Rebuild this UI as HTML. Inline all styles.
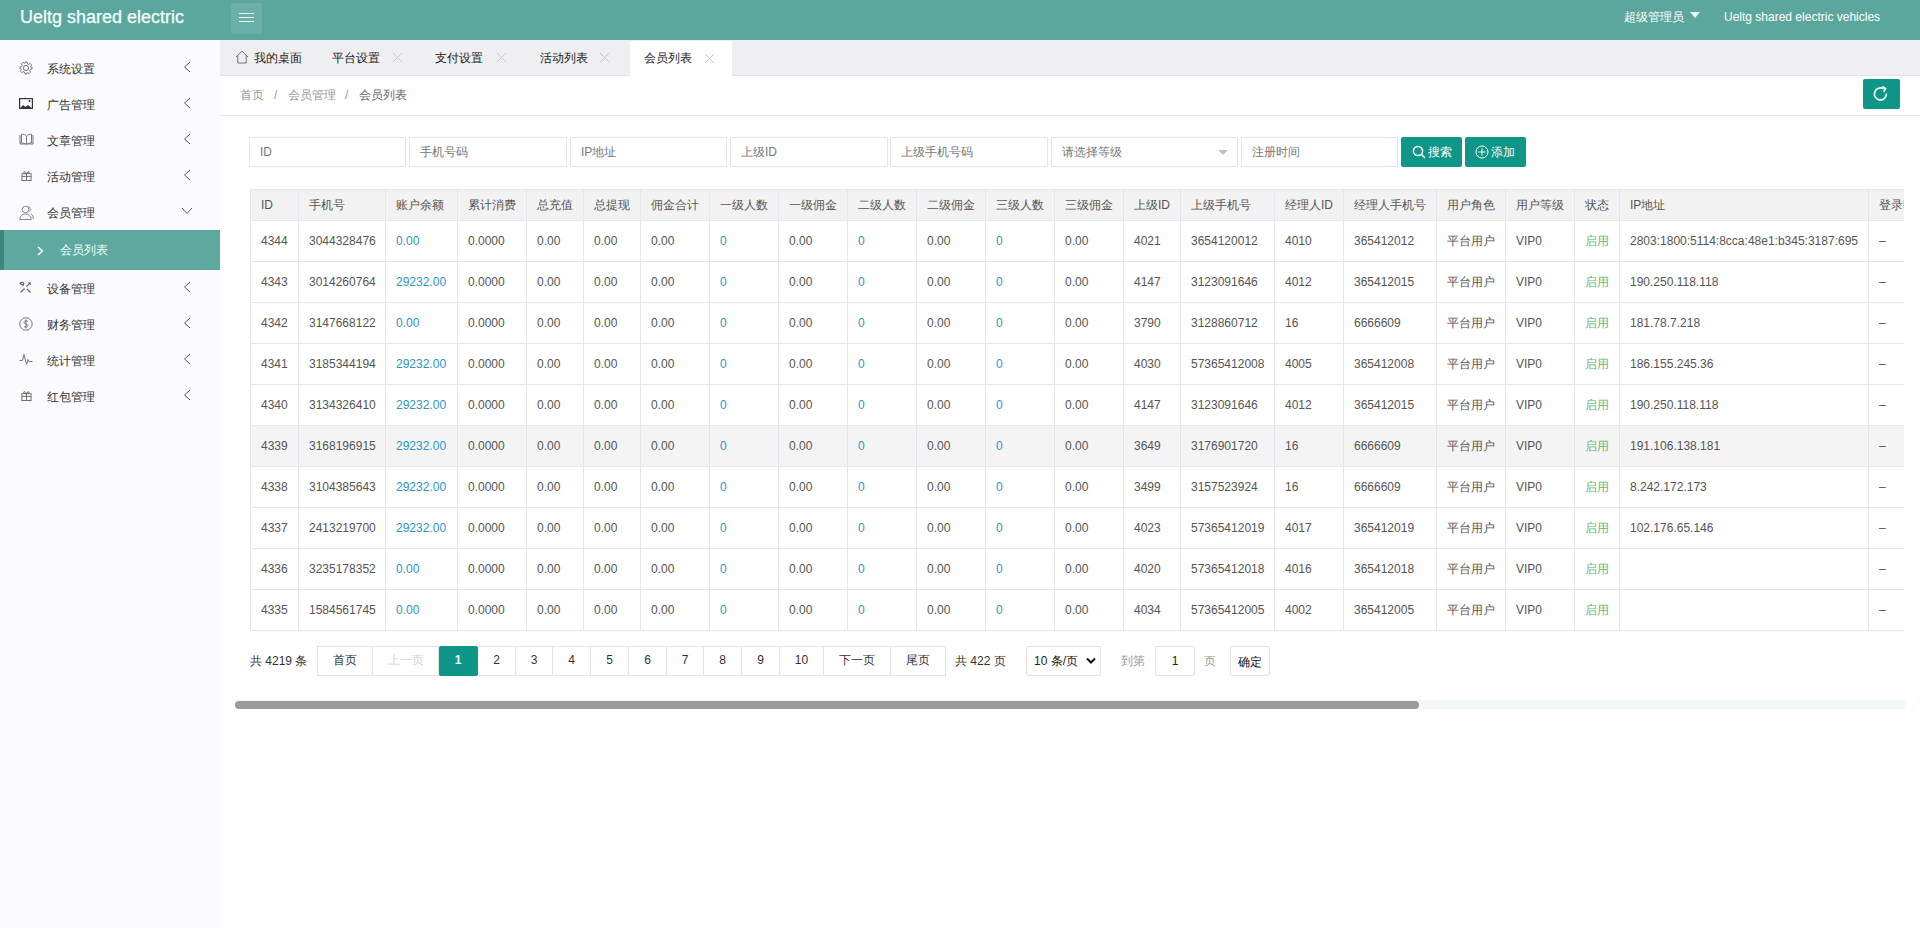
<!DOCTYPE html>
<html><head><meta charset="utf-8">
<style>
*{margin:0;padding:0;box-sizing:border-box}
html,body{width:1920px;height:928px;overflow:hidden;background:#fff;font-family:"Liberation Sans",sans-serif;font-size:12px;color:#666}
.hdr{position:absolute;left:0;top:0;width:1920px;height:40px;background:#5ca79d}
.logo{position:absolute;left:20px;top:6px;font-size:18px;color:#f2fffd;line-height:22px;white-space:nowrap;-webkit-text-stroke:0.25px #f2fffd}
.ham{position:absolute;left:231px;top:3px;width:31px;height:31px;background:#6bb0a7;border-radius:2px}
.ham i{position:absolute;left:8px;width:15px;height:1px;background:#e6fffb}
.hr1{position:absolute;left:1624px;top:9px;color:#fff;font-size:12px;line-height:16px;white-space:nowrap}
.tri{position:absolute;left:1690px;top:12px;width:0;height:0;border-left:5px solid transparent;border-right:5px solid transparent;border-top:6px solid #e8fbf8}
.hr2{position:absolute;left:1724px;top:9px;color:#fff;font-size:12px;line-height:16px;white-space:nowrap}
.side{position:absolute;left:0;top:40px;width:220px;height:888px;background:#fbfafc}
.mi{position:absolute;left:0;width:220px;height:36px;margin-top:-40px}
.mi .ic{position:absolute;left:19px;top:11px;width:15px;height:15px;line-height:0}
.mi .mt{position:absolute;left:47px;top:11px;line-height:16px;color:#333;font-size:12px}
.mi .ar{position:absolute;line-height:0}
.sub{position:absolute;left:0;top:190px;width:220px;height:40px;background:#5fa89f;border-left:4px solid #3f857c}
.subar{position:absolute;left:33px;top:16px;line-height:0}
.subt{position:absolute;left:56px;top:12px;line-height:16px;color:#eafffb}
.tabs{position:absolute;left:220px;top:40px;width:1700px;height:36px;background:#efeff1;border-bottom:1px solid #e4e4e6}
.tab{position:absolute;top:0;height:35px;line-height:36px;color:#222;white-space:nowrap}
.tab.act{background:#fff;height:36px;top:1px;line-height:34px}
.tx{position:absolute;top:12px;line-height:0}
.bc{position:absolute;left:220px;top:76px;width:1700px;height:40px;border-bottom:1px solid #eaeaea}
.bc span{position:absolute;top:11px;line-height:16px;color:#999}
.refresh{position:absolute;left:1863px;top:79px;width:37px;height:30px;background:#0f9688;border-radius:2px}
.inp{position:absolute;top:137px;height:30px;border:1px solid #e6e5ea;background:#fff;color:#777;line-height:28px;padding-left:10px;white-space:nowrap}
.btn{position:absolute;top:137px;height:30px;background:#0f9688;color:#fff;border-radius:2px;line-height:30px;white-space:nowrap}
.tbl{position:absolute;left:250px;top:189px;width:1654px;overflow:hidden;border-top:1px solid #e6e5ea}
.tr{display:flex;height:41px;border-bottom:1px solid #e6e5ea;background:#fff;width:1800px}
.tr.th{height:31px;background:#f2f2f2;color:#666}
.tr.hv{background:#f4f4f4}
.c{flex:none;border-left:1px solid #e6e5ea;padding-left:10px;line-height:40px;white-space:nowrap;overflow:hidden;color:#555}
.th .c{line-height:30px}
.bl{color:#2d95cd}
.gr{color:#5fb878}
.pg{position:absolute;top:646px;height:30px;line-height:27px;text-align:center;border:1px solid #e2e2e2;border-left:none;background:#fff;color:#333}
.pg:first-child{border-left:1px solid #e2e2e2}
.pg.dis{color:#d2d2d2}
.pg.act{background:#0f9688;color:#e8fffb;border-color:#0f9688;border-radius:2px;font-weight:bold}
.ptxt{position:absolute;top:653px;line-height:16px;color:#333;white-space:nowrap}
.scroll{position:absolute;left:235px;top:700px;width:1670px;height:9px;background:#f2f8f8}
.thumb{position:absolute;left:235px;top:701px;width:1184px;height:8px;background:#9b9b9d;border-radius:4px}
</style></head><body>
<div class="hdr">
  <div class="logo">Ueltg shared electric</div>
  <div class="ham"><i style="top:10px"></i><i style="top:14px"></i><i style="top:18px"></i></div>
  <div class="hr1">超级管理员</div><div class="tri"></div>
  <div class="hr2">Ueltg shared electric vehicles</div>
</div>
<div class="side"><div class="mi" style="top:50px"><span class="ic"><svg width="14" height="14" viewBox="0 0 14 14" fill="none" stroke="#777" stroke-width="1"><circle cx="7" cy="7" r="2.6"/><path d="M6 1h2l.4 1.7 1.3.6 1.5-.9 1.4 1.4-.9 1.5.6 1.3L13 6v2l-1.7.4-.6 1.3.9 1.5-1.4 1.4-1.5-.9-1.3.6L8 13H6l-.4-1.7-1.3-.6-1.5.9-1.4-1.4.9-1.5-.6-1.3L1 8V6l1.7-.4.6-1.3-.9-1.5 1.4-1.4 1.5.9 1.3-.6z"/></svg></span><span class="mt">系统设置</span><span class="ar" style="left:183px;top:11px"><svg width="8" height="12" viewBox="0 0 8 12" fill="none" stroke="#555" stroke-width="1"><path d="M7 1L1.5 6 7 11"/></svg></span></div><div class="mi" style="top:86px"><span class="ic"><svg style="margin-top:1px" width="14" height="11" viewBox="0 0 14 11"><rect x="0.6" y="0.6" width="12.8" height="9.8" fill="none" stroke="#333" stroke-width="1.2"/><path d="M1 10.5l3-3.5 2.5 2 2.5-2 4 3.5z" fill="#333"/><circle cx="10.5" cy="3" r="1" fill="#333"/></svg></span><span class="mt">广告管理</span><span class="ar" style="left:183px;top:11px"><svg width="8" height="12" viewBox="0 0 8 12" fill="none" stroke="#555" stroke-width="1"><path d="M7 1L1.5 6 7 11"/></svg></span></div><div class="mi" style="top:122px"><span class="ic"><svg width="15" height="12" viewBox="0 0 15 12" fill="none" stroke="#777" stroke-width="1"><path d="M1 2v9h5.5M14 2v9H8.5"/><path d="M2.5 10V1.2C4.5 1 6 1.5 7.5 3c1.5-1.5 3-2 5-1.8V10C10.5 10 9 10.5 7.5 11.5 6 10.5 4.5 10 2.5 10z"/><path d="M7.5 3v8"/></svg></span><span class="mt">文章管理</span><span class="ar" style="left:183px;top:11px"><svg width="8" height="12" viewBox="0 0 8 12" fill="none" stroke="#555" stroke-width="1"><path d="M7 1L1.5 6 7 11"/></svg></span></div><div class="mi" style="top:158px"><span class="ic"><svg style="margin-left:2px;margin-top:1px" width="11" height="11" viewBox="0 0 12 12" fill="none" stroke="#666" stroke-width="1"><rect x="1" y="4" width="10" height="7.5"/><path d="M1 7h10M6 4v7.5"/><path d="M6 4C5 1.5 3 1 3 2.5S5 4 6 4c1 0 3-.5 3-1.5S7 1.5 6 4"/></svg></span><span class="mt">活动管理</span><span class="ar" style="left:183px;top:11px"><svg width="8" height="12" viewBox="0 0 8 12" fill="none" stroke="#555" stroke-width="1"><path d="M7 1L1.5 6 7 11"/></svg></span></div><div class="mi" style="top:194px"><span class="ic"><svg width="15" height="15" viewBox="0 0 15 15" fill="none" stroke="#888" stroke-width="1"><circle cx="6.5" cy="4.5" r="3.3"/><path d="M0.8 14.5c0-3.5 2.5-5.5 5.7-5.5s5.7 2 5.7 5.5z"/><path d="M9.5 1.5c2 .5 2.5 3.5 1 5M12 9c1.5.8 2.3 2.5 2.3 5"/></svg></span><span class="mt">会员管理</span><span class="ar" style="left:181px;top:13px"><svg width="12" height="8" viewBox="0 0 12 8" fill="none" stroke="#555" stroke-width="1"><path d="M1 1l5 5.5 5-5.5"/></svg></span></div><div class="sub"><span class="subar"><svg width="7" height="10" viewBox="0 0 7 10" fill="none" stroke="#e8fffb" stroke-width="1.6"><path d="M1 1l4.3 4L1 9"/></svg></span><span class="subt">会员列表</span></div><div class="mi" style="top:270px"><span class="ic"><svg width="13" height="13" viewBox="0 0 13 13" fill="none" stroke="#666" stroke-width="1.1"><path d="M1.5 11.5l4-4M7.5 5.5l4-4M9.5 1.2l2.3 2.3M1 2.5c1-1.5 3-1.5 3.8 0L4 4.5 2.8 3.5zM8 8l3.5 3.5"/></svg></span><span class="mt">设备管理</span><span class="ar" style="left:183px;top:11px"><svg width="8" height="12" viewBox="0 0 8 12" fill="none" stroke="#555" stroke-width="1"><path d="M7 1L1.5 6 7 11"/></svg></span></div><div class="mi" style="top:306px"><span class="ic"><svg width="14" height="14" viewBox="0 0 14 14" fill="none" stroke="#777" stroke-width="1"><circle cx="7" cy="7" r="6.2"/><path d="M9 4.6C8.5 4 7.8 3.8 7 3.8 5.8 3.8 5 4.4 5 5.4c0 2 4 1.2 4 3.2 0 1-.9 1.6-2 1.6-.9 0-1.6-.3-2.1-.9M7 2.6v8.8"/></svg></span><span class="mt">财务管理</span><span class="ar" style="left:183px;top:11px"><svg width="8" height="12" viewBox="0 0 8 12" fill="none" stroke="#555" stroke-width="1"><path d="M7 1L1.5 6 7 11"/></svg></span></div><div class="mi" style="top:342px"><span class="ic"><svg width="14" height="13" viewBox="0 0 14 13" fill="none" stroke="#777" stroke-width="1"><path d="M0.5 7.5h3l1.5-6 2.5 10 1.5-5 1 2h3.5"/></svg></span><span class="mt">统计管理</span><span class="ar" style="left:183px;top:11px"><svg width="8" height="12" viewBox="0 0 8 12" fill="none" stroke="#555" stroke-width="1"><path d="M7 1L1.5 6 7 11"/></svg></span></div><div class="mi" style="top:378px"><span class="ic"><svg style="margin-left:2px;margin-top:1px" width="11" height="11" viewBox="0 0 12 12" fill="none" stroke="#666" stroke-width="1"><rect x="1" y="4" width="10" height="7.5"/><path d="M1 7h10M6 4v7.5"/><path d="M6 4C5 1.5 3 1 3 2.5S5 4 6 4c1 0 3-.5 3-1.5S7 1.5 6 4"/></svg></span><span class="mt">红包管理</span><span class="ar" style="left:183px;top:11px"><svg width="8" height="12" viewBox="0 0 8 12" fill="none" stroke="#555" stroke-width="1"><path d="M7 1L1.5 6 7 11"/></svg></span></div></div>
<div class="tabs">
  <div class="tab" style="left:14px"><svg style="position:absolute;left:1px;top:10px" width="14" height="14" viewBox="0 0 14 14" fill="none" stroke="#666" stroke-width="0.9"><path d="M1 7L7 1.2 13 7M2.8 5.5V13h8.4V5.5"/></svg><span style="position:absolute;left:20px;top:0">我的桌面</span></div>
  <div class="tab" style="left:112px"><span>平台设置</span><svg class="tx" style="left:60px" width="11" height="11" viewBox="0 0 11 11" stroke="#c8c8c8" stroke-width="1"><path d="M1 1l9 9M10 1l-9 9"/></svg></div>
  <div class="tab" style="left:215px"><span>支付设置</span><svg class="tx" style="left:61px" width="11" height="11" viewBox="0 0 11 11" stroke="#c8c8c8" stroke-width="1"><path d="M1 1l9 9M10 1l-9 9"/></svg></div>
  <div class="tab" style="left:320px"><span>活动列表</span><svg class="tx" style="left:59px" width="11" height="11" viewBox="0 0 11 11" stroke="#c8c8c8" stroke-width="1"><path d="M1 1l9 9M10 1l-9 9"/></svg></div>
  <div class="tab act" style="left:410px;width:102px"><span style="position:absolute;left:14px">会员列表</span><svg class="tx" style="left:74px" width="11" height="11" viewBox="0 0 11 11" stroke="#c8c8c8" stroke-width="1"><path d="M1 1l9 9M10 1l-9 9"/></svg></div>
</div>
<div class="bc"><span style="left:20px">首页</span><span style="left:54px">/</span><span style="left:68px">会员管理</span><span style="left:125px">/</span><span style="left:139px;color:#666">会员列表</span></div>
<div class="refresh"><svg style="position:absolute;left:9px;top:7px" width="18" height="17" viewBox="0 0 18 17" fill="none" stroke="#f0fffd" stroke-width="1.7"><path d="M14.4 7.5A6 6 0 1 1 11.5 2.8"/><path d="M10.3 0.6l3.2 2-1.8 3.2"/></svg></div>
<div class="inp" style="left:249px;width:157px">ID</div>
<div class="inp" style="left:409px;width:158px">手机号码</div>
<div class="inp" style="left:570px;width:157px">IP地址</div>
<div class="inp" style="left:730px;width:158px">上级ID</div>
<div class="inp" style="left:890px;width:158px">上级手机号码</div>
<div class="inp" style="left:1051px;width:187px">请选择等级<i style="position:absolute;left:166px;top:12px;border-left:5.5px solid transparent;border-right:5.5px solid transparent;border-top:5.5px solid #c2c2c2"></i></div>
<div class="inp" style="left:1241px;width:157px">注册时间</div>
<div class="btn" style="left:1401px;width:61px"><svg style="position:absolute;left:11px;top:8px" width="14" height="14" viewBox="0 0 14 14" fill="none" stroke="#fff" stroke-width="1.5"><circle cx="6" cy="6" r="4.6"/><path d="M9.3 9.3L13 13"/></svg><span style="position:absolute;left:27px">搜索</span></div>
<div class="btn" style="left:1465px;width:61px"><svg style="position:absolute;left:10px;top:8px" width="14" height="14" viewBox="0 0 14 14" fill="none" stroke="#fff" stroke-width="1"><circle cx="7" cy="7" r="6"/><path d="M7 3.5v7M3.5 7h7"/></svg><span style="position:absolute;left:26px">添加</span></div>
<div class="tbl"><div class="tr th"><div class="c" style="width:48px">ID</div><div class="c" style="width:87px">手机号</div><div class="c" style="width:72px">账户余额</div><div class="c" style="width:69px">累计消费</div><div class="c" style="width:57px">总充值</div><div class="c" style="width:57px">总提现</div><div class="c" style="width:69px">佣金合计</div><div class="c" style="width:69px">一级人数</div><div class="c" style="width:69px">一级佣金</div><div class="c" style="width:69px">二级人数</div><div class="c" style="width:69px">二级佣金</div><div class="c" style="width:69px">三级人数</div><div class="c" style="width:69px">三级佣金</div><div class="c" style="width:57px">上级ID</div><div class="c" style="width:94px">上级手机号</div><div class="c" style="width:69px">经理人ID</div><div class="c" style="width:93px">经理人手机号</div><div class="c" style="width:69px">用户角色</div><div class="c" style="width:69px">用户等级</div><div class="c" style="width:45px">状态</div><div class="c" style="width:249px">IP地址</div><div class="c" style="width:122px">登录时间</div></div><div class="tr"><div class="c" style="width:48px">4344</div><div class="c" style="width:87px">3044328476</div><div class="c" style="width:72px"><span class="bl">0.00</span></div><div class="c" style="width:69px">0.0000</div><div class="c" style="width:57px">0.00</div><div class="c" style="width:57px">0.00</div><div class="c" style="width:69px">0.00</div><div class="c" style="width:69px"><span class="bl">0</span></div><div class="c" style="width:69px">0.00</div><div class="c" style="width:69px"><span class="bl">0</span></div><div class="c" style="width:69px">0.00</div><div class="c" style="width:69px"><span class="bl">0</span></div><div class="c" style="width:69px">0.00</div><div class="c" style="width:57px">4021</div><div class="c" style="width:94px">3654120012</div><div class="c" style="width:69px">4010</div><div class="c" style="width:93px">365412012</div><div class="c" style="width:69px">平台用户</div><div class="c" style="width:69px">VIP0</div><div class="c" style="width:45px"><span class="gr">启用</span></div><div class="c" style="width:249px">2803:1800:5114:8cca:48e1:b345:3187:695</div><div class="c" style="width:122px">–</div></div><div class="tr"><div class="c" style="width:48px">4343</div><div class="c" style="width:87px">3014260764</div><div class="c" style="width:72px"><span class="bl">29232.00</span></div><div class="c" style="width:69px">0.0000</div><div class="c" style="width:57px">0.00</div><div class="c" style="width:57px">0.00</div><div class="c" style="width:69px">0.00</div><div class="c" style="width:69px"><span class="bl">0</span></div><div class="c" style="width:69px">0.00</div><div class="c" style="width:69px"><span class="bl">0</span></div><div class="c" style="width:69px">0.00</div><div class="c" style="width:69px"><span class="bl">0</span></div><div class="c" style="width:69px">0.00</div><div class="c" style="width:57px">4147</div><div class="c" style="width:94px">3123091646</div><div class="c" style="width:69px">4012</div><div class="c" style="width:93px">365412015</div><div class="c" style="width:69px">平台用户</div><div class="c" style="width:69px">VIP0</div><div class="c" style="width:45px"><span class="gr">启用</span></div><div class="c" style="width:249px">190.250.118.118</div><div class="c" style="width:122px">–</div></div><div class="tr"><div class="c" style="width:48px">4342</div><div class="c" style="width:87px">3147668122</div><div class="c" style="width:72px"><span class="bl">0.00</span></div><div class="c" style="width:69px">0.0000</div><div class="c" style="width:57px">0.00</div><div class="c" style="width:57px">0.00</div><div class="c" style="width:69px">0.00</div><div class="c" style="width:69px"><span class="bl">0</span></div><div class="c" style="width:69px">0.00</div><div class="c" style="width:69px"><span class="bl">0</span></div><div class="c" style="width:69px">0.00</div><div class="c" style="width:69px"><span class="bl">0</span></div><div class="c" style="width:69px">0.00</div><div class="c" style="width:57px">3790</div><div class="c" style="width:94px">3128860712</div><div class="c" style="width:69px">16</div><div class="c" style="width:93px">6666609</div><div class="c" style="width:69px">平台用户</div><div class="c" style="width:69px">VIP0</div><div class="c" style="width:45px"><span class="gr">启用</span></div><div class="c" style="width:249px">181.78.7.218</div><div class="c" style="width:122px">–</div></div><div class="tr"><div class="c" style="width:48px">4341</div><div class="c" style="width:87px">3185344194</div><div class="c" style="width:72px"><span class="bl">29232.00</span></div><div class="c" style="width:69px">0.0000</div><div class="c" style="width:57px">0.00</div><div class="c" style="width:57px">0.00</div><div class="c" style="width:69px">0.00</div><div class="c" style="width:69px"><span class="bl">0</span></div><div class="c" style="width:69px">0.00</div><div class="c" style="width:69px"><span class="bl">0</span></div><div class="c" style="width:69px">0.00</div><div class="c" style="width:69px"><span class="bl">0</span></div><div class="c" style="width:69px">0.00</div><div class="c" style="width:57px">4030</div><div class="c" style="width:94px">57365412008</div><div class="c" style="width:69px">4005</div><div class="c" style="width:93px">365412008</div><div class="c" style="width:69px">平台用户</div><div class="c" style="width:69px">VIP0</div><div class="c" style="width:45px"><span class="gr">启用</span></div><div class="c" style="width:249px">186.155.245.36</div><div class="c" style="width:122px">–</div></div><div class="tr"><div class="c" style="width:48px">4340</div><div class="c" style="width:87px">3134326410</div><div class="c" style="width:72px"><span class="bl">29232.00</span></div><div class="c" style="width:69px">0.0000</div><div class="c" style="width:57px">0.00</div><div class="c" style="width:57px">0.00</div><div class="c" style="width:69px">0.00</div><div class="c" style="width:69px"><span class="bl">0</span></div><div class="c" style="width:69px">0.00</div><div class="c" style="width:69px"><span class="bl">0</span></div><div class="c" style="width:69px">0.00</div><div class="c" style="width:69px"><span class="bl">0</span></div><div class="c" style="width:69px">0.00</div><div class="c" style="width:57px">4147</div><div class="c" style="width:94px">3123091646</div><div class="c" style="width:69px">4012</div><div class="c" style="width:93px">365412015</div><div class="c" style="width:69px">平台用户</div><div class="c" style="width:69px">VIP0</div><div class="c" style="width:45px"><span class="gr">启用</span></div><div class="c" style="width:249px">190.250.118.118</div><div class="c" style="width:122px">–</div></div><div class="tr hv"><div class="c" style="width:48px">4339</div><div class="c" style="width:87px">3168196915</div><div class="c" style="width:72px"><span class="bl">29232.00</span></div><div class="c" style="width:69px">0.0000</div><div class="c" style="width:57px">0.00</div><div class="c" style="width:57px">0.00</div><div class="c" style="width:69px">0.00</div><div class="c" style="width:69px"><span class="bl">0</span></div><div class="c" style="width:69px">0.00</div><div class="c" style="width:69px"><span class="bl">0</span></div><div class="c" style="width:69px">0.00</div><div class="c" style="width:69px"><span class="bl">0</span></div><div class="c" style="width:69px">0.00</div><div class="c" style="width:57px">3649</div><div class="c" style="width:94px">3176901720</div><div class="c" style="width:69px">16</div><div class="c" style="width:93px">6666609</div><div class="c" style="width:69px">平台用户</div><div class="c" style="width:69px">VIP0</div><div class="c" style="width:45px"><span class="gr">启用</span></div><div class="c" style="width:249px">191.106.138.181</div><div class="c" style="width:122px">–</div></div><div class="tr"><div class="c" style="width:48px">4338</div><div class="c" style="width:87px">3104385643</div><div class="c" style="width:72px"><span class="bl">29232.00</span></div><div class="c" style="width:69px">0.0000</div><div class="c" style="width:57px">0.00</div><div class="c" style="width:57px">0.00</div><div class="c" style="width:69px">0.00</div><div class="c" style="width:69px"><span class="bl">0</span></div><div class="c" style="width:69px">0.00</div><div class="c" style="width:69px"><span class="bl">0</span></div><div class="c" style="width:69px">0.00</div><div class="c" style="width:69px"><span class="bl">0</span></div><div class="c" style="width:69px">0.00</div><div class="c" style="width:57px">3499</div><div class="c" style="width:94px">3157523924</div><div class="c" style="width:69px">16</div><div class="c" style="width:93px">6666609</div><div class="c" style="width:69px">平台用户</div><div class="c" style="width:69px">VIP0</div><div class="c" style="width:45px"><span class="gr">启用</span></div><div class="c" style="width:249px">8.242.172.173</div><div class="c" style="width:122px">–</div></div><div class="tr"><div class="c" style="width:48px">4337</div><div class="c" style="width:87px">2413219700</div><div class="c" style="width:72px"><span class="bl">29232.00</span></div><div class="c" style="width:69px">0.0000</div><div class="c" style="width:57px">0.00</div><div class="c" style="width:57px">0.00</div><div class="c" style="width:69px">0.00</div><div class="c" style="width:69px"><span class="bl">0</span></div><div class="c" style="width:69px">0.00</div><div class="c" style="width:69px"><span class="bl">0</span></div><div class="c" style="width:69px">0.00</div><div class="c" style="width:69px"><span class="bl">0</span></div><div class="c" style="width:69px">0.00</div><div class="c" style="width:57px">4023</div><div class="c" style="width:94px">57365412019</div><div class="c" style="width:69px">4017</div><div class="c" style="width:93px">365412019</div><div class="c" style="width:69px">平台用户</div><div class="c" style="width:69px">VIP0</div><div class="c" style="width:45px"><span class="gr">启用</span></div><div class="c" style="width:249px">102.176.65.146</div><div class="c" style="width:122px">–</div></div><div class="tr"><div class="c" style="width:48px">4336</div><div class="c" style="width:87px">3235178352</div><div class="c" style="width:72px"><span class="bl">0.00</span></div><div class="c" style="width:69px">0.0000</div><div class="c" style="width:57px">0.00</div><div class="c" style="width:57px">0.00</div><div class="c" style="width:69px">0.00</div><div class="c" style="width:69px"><span class="bl">0</span></div><div class="c" style="width:69px">0.00</div><div class="c" style="width:69px"><span class="bl">0</span></div><div class="c" style="width:69px">0.00</div><div class="c" style="width:69px"><span class="bl">0</span></div><div class="c" style="width:69px">0.00</div><div class="c" style="width:57px">4020</div><div class="c" style="width:94px">57365412018</div><div class="c" style="width:69px">4016</div><div class="c" style="width:93px">365412018</div><div class="c" style="width:69px">平台用户</div><div class="c" style="width:69px">VIP0</div><div class="c" style="width:45px"><span class="gr">启用</span></div><div class="c" style="width:249px"></div><div class="c" style="width:122px">–</div></div><div class="tr"><div class="c" style="width:48px">4335</div><div class="c" style="width:87px">1584561745</div><div class="c" style="width:72px"><span class="bl">0.00</span></div><div class="c" style="width:69px">0.0000</div><div class="c" style="width:57px">0.00</div><div class="c" style="width:57px">0.00</div><div class="c" style="width:69px">0.00</div><div class="c" style="width:69px"><span class="bl">0</span></div><div class="c" style="width:69px">0.00</div><div class="c" style="width:69px"><span class="bl">0</span></div><div class="c" style="width:69px">0.00</div><div class="c" style="width:69px"><span class="bl">0</span></div><div class="c" style="width:69px">0.00</div><div class="c" style="width:57px">4034</div><div class="c" style="width:94px">57365412005</div><div class="c" style="width:69px">4002</div><div class="c" style="width:93px">365412005</div><div class="c" style="width:69px">平台用户</div><div class="c" style="width:69px">VIP0</div><div class="c" style="width:45px"><span class="gr">启用</span></div><div class="c" style="width:249px"></div><div class="c" style="width:122px">–</div></div></div>
<div class="ptxt" style="left:250px">共 4219 条</div>
<div class="pager"><div class="pg " style="left:317px;width:56px">首页</div><div class="pg dis" style="left:373px;width:66px">上一页</div><div class="pg act" style="left:439px;width:39px">1</div><div class="pg " style="left:478px;width:38px">2</div><div class="pg " style="left:516px;width:37px">3</div><div class="pg " style="left:553px;width:38px">4</div><div class="pg " style="left:591px;width:38px">5</div><div class="pg " style="left:629px;width:38px">6</div><div class="pg " style="left:667px;width:37px">7</div><div class="pg " style="left:704px;width:38px">8</div><div class="pg " style="left:742px;width:38px">9</div><div class="pg " style="left:780px;width:44px">10</div><div class="pg " style="left:824px;width:67px">下一页</div><div class="pg " style="left:891px;width:55px">尾页</div></div>
<div class="ptxt" style="left:955px">共 422 页</div>
<div style="position:absolute;left:1026px;top:646px;width:75px;height:30px;border:1px solid #e2e2e2;border-radius:2px;color:#222;line-height:28px;padding-left:7px">10 条/页<svg style="position:absolute;left:59px;top:10px" width="10" height="8" viewBox="0 0 10 8" fill="none" stroke="#111" stroke-width="2"><path d="M1 1.5l4 4 4-4"/></svg></div>
<div class="ptxt" style="left:1121px;color:#999">到第</div>
<div style="position:absolute;left:1155px;top:646px;width:40px;height:30px;border:1px solid #e2e2e2;border-radius:2px;color:#222;line-height:28px;text-align:center">1</div>
<div class="ptxt" style="left:1204px;color:#999">页</div>
<div style="position:absolute;left:1230px;top:646px;width:40px;height:30px;border:1px solid #e2e2e2;border-radius:2px;color:#111;line-height:30px;text-align:center">确定</div>
<div class="scroll"></div><div class="thumb"></div>
</body></html>
